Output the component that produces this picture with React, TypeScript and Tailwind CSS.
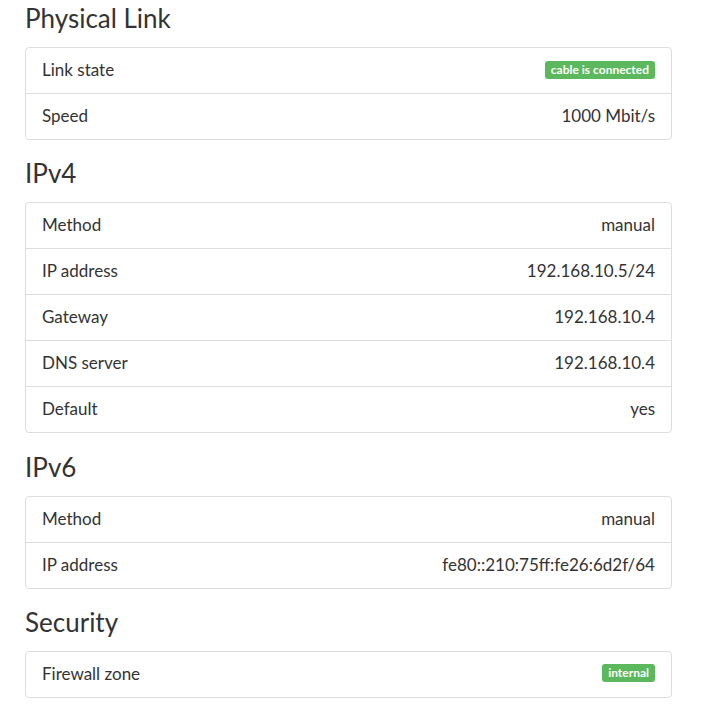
import React from 'react';

type Row = { label: string; value: string; badge?: boolean };

const sections: { title: string; rows: Row[] }[] = [
  {
    title: 'Physical Link',
    rows: [
      { label: 'Link state', value: 'cable is connected', badge: true },
      { label: 'Speed', value: '1000 Mbit/s' },
    ],
  },
  {
    title: 'IPv4',
    rows: [
      { label: 'Method', value: 'manual' },
      { label: 'IP address', value: '192.168.10.5/24' },
      { label: 'Gateway', value: '192.168.10.4' },
      { label: 'DNS server', value: '192.168.10.4' },
      { label: 'Default', value: 'yes' },
    ],
  },
  {
    title: 'IPv6',
    rows: [
      { label: 'Method', value: 'manual' },
      { label: 'IP address', value: 'fe80::210:75ff:fe26:6d2f/64' },
    ],
  },
  {
    title: 'Security',
    rows: [{ label: 'Firewall zone', value: 'internal', badge: true }],
  },
];

export default function App() {
  return (
    <div className="min-h-screen bg-white px-[25px] text-[#333]" style={{ fontFamily: 'Lato, "Open Sans", sans-serif' }}>
      {sections.map((section, i) => (
        <section key={section.title} className={`w-[647px] ${i > 0 ? 'mt-[15.33px]' : ''}`}>
          <h3 className="pt-[3px] pb-[13px] text-[26px] font-normal leading-[31px]">{section.title}</h3>
          <div className="rounded border border-[#ddd]">
            {section.rows.map((row, j) => (
              <div
                key={row.label}
                className={`flex items-center justify-between px-4 pt-[9px] pb-[11px] text-[17px] leading-[25px] ${
                  j > 0 ? 'border-t border-[#ddd]' : ''
                }`}
              >
                <span>{row.label}</span>
                {row.badge ? (
                  <span className="rounded-[3px] bg-[#5cb85c] px-[6px] pt-[1px] pb-[2px] text-[12px] font-bold leading-[15px] text-white">
                    {row.value}
                  </span>
                ) : (
                  <span>{row.value}</span>
                )}
              </div>
            ))}
          </div>
        </section>
      ))}
    </div>
  );
}
